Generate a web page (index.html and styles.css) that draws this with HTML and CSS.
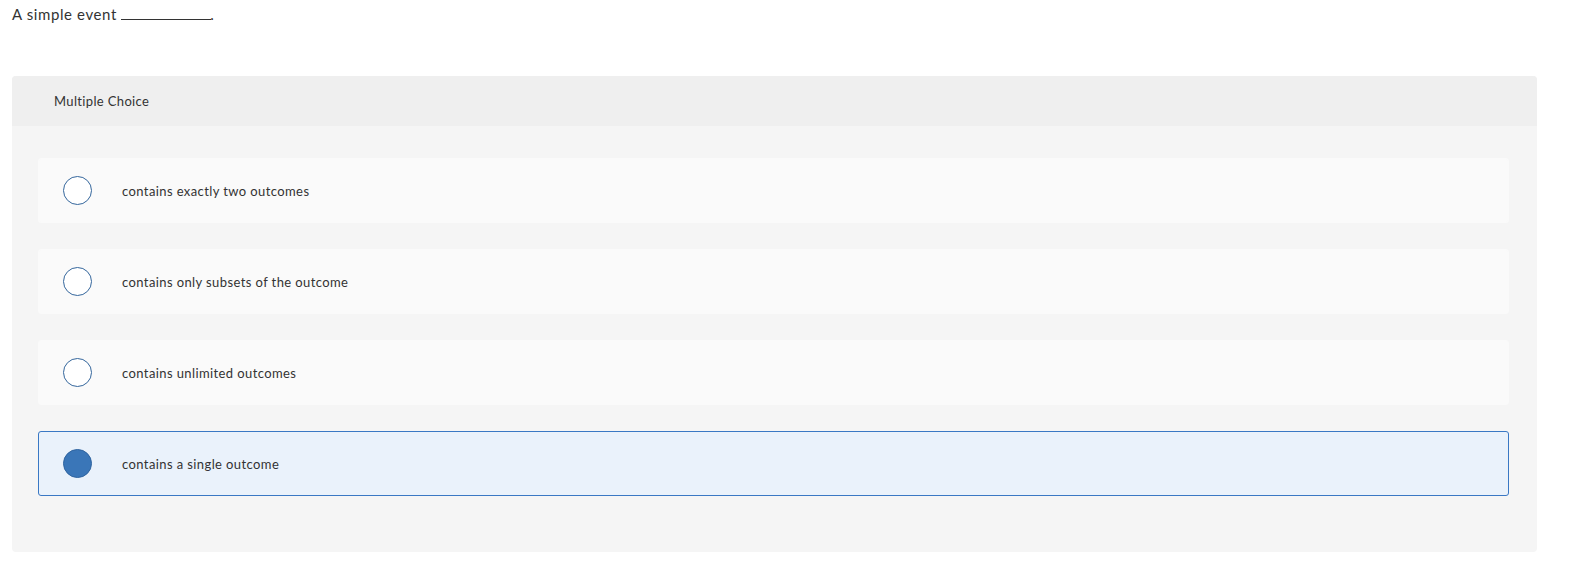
FILE: index.html
```html
<!DOCTYPE html>
<html>
<head>
<meta charset="utf-8">
<link rel="stylesheet" href="styles.css">
</head>
<body>
<div class="page">
  <p class="prompt">A simple event <span class="blank"></span>.</p>
  <section class="panel">
    <header class="panel-head">Multiple Choice</header>
    <div class="options">
      <label class="option">
        <span class="radio"></span>
        <span class="opt-text">contains exactly two outcomes</span>
      </label>
      <label class="option">
        <span class="radio"></span>
        <span class="opt-text">contains only subsets of the outcome</span>
      </label>
      <label class="option">
        <span class="radio"></span>
        <span class="opt-text">contains unlimited outcomes</span>
      </label>
      <label class="option selected">
        <span class="radio"></span>
        <span class="opt-text">contains a single outcome</span>
      </label>
    </div>
  </section>
</div>
</body>
</html>
```
FILE: styles.css
```css
* { box-sizing: border-box; }
html, body { margin: 0; padding: 0; background: #fff; }
body {
  font-family: "Lato", "Open Sans", "Liberation Sans", sans-serif;
  color: #333;
}
.page {
  padding: 4px 0 0 12px;
}
.prompt {
  margin: 0;
  font-size: 15px;
  line-height: 20px;
  letter-spacing: 0.6px;
  color: #333;
}
.blank {
  display: inline-block;
  width: 90px;
  border-bottom: 1px solid #333;
  vertical-align: baseline;
  margin-right: -1px;
}
.panel {
  margin-top: 52px;
  width: 1525px;
  background: #f5f5f5;
  border-radius: 4px;
  overflow: hidden;
}
.panel-head {
  height: 50px;
  background: #efefef;
  padding-left: 42px;
  display: flex;
  align-items: center;
  font-size: 13px;
  letter-spacing: 0.35px;
  color: #333;
}
.options {
  padding: 32px 28px 56px 26px;
  display: flex;
  flex-direction: column;
  gap: 26px;
}
.option {
  height: 65px;
  background: #fafafa;
  border: 1px solid #fafafa;
  border-radius: 3px;
  display: flex;
  align-items: center;
  padding-left: 24px;
}
.option.selected {
  background: #eaf2fb;
  border-color: #3a78c4;
}
.radio {
  width: 29px;
  height: 29px;
  border-radius: 50%;
  border: 1.5px solid #34669c;
  background: #fff;
  flex: none;
}
.selected .radio {
  background: #3a76b8;
  border-color: #2f64a0;
}
.opt-text {
  margin-left: 30px;
  font-size: 13px;
  letter-spacing: 0.4px;
  color: #333;
}
```
